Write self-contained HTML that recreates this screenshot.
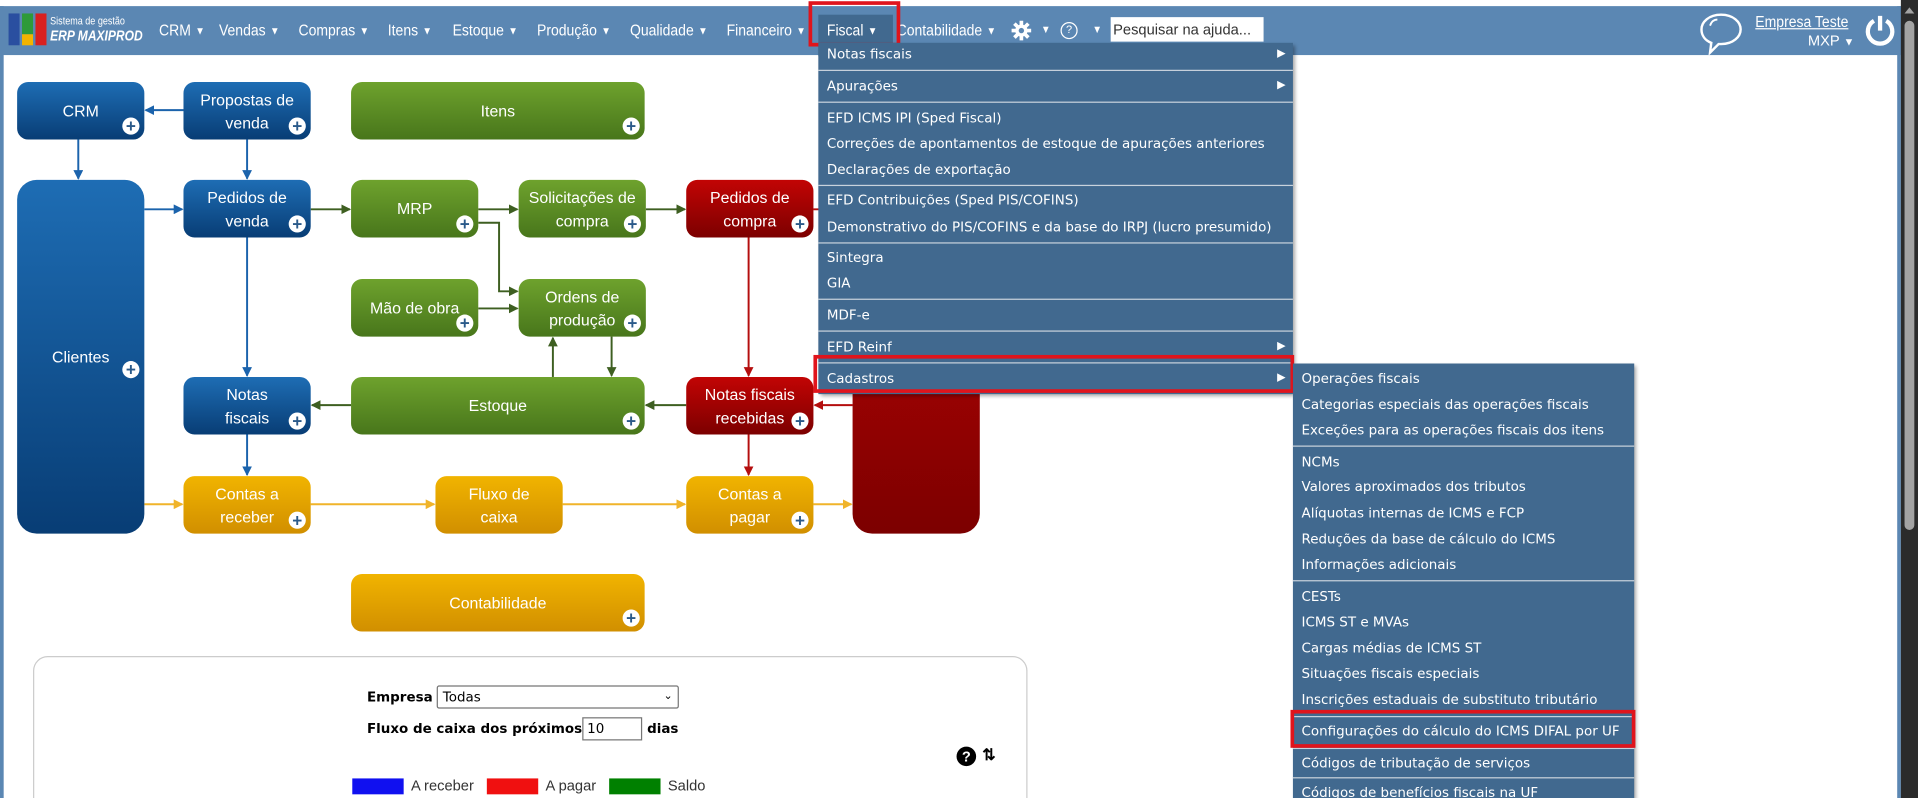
<!DOCTYPE html>
<html><head><meta charset="utf-8">
<style>
*{margin:0;padding:0;box-sizing:border-box}
html,body{width:1918px;height:798px;overflow:hidden;background:#fff}
#s{position:absolute;left:0;top:0;width:1568px;height:652px;overflow:hidden;transform:scale(1.22321,1.22393);transform-origin:0 0;font-family:"Liberation Sans",sans-serif}
.a{position:absolute}
.bar{left:0;top:5px;width:1568px;height:40px;background:#5b87b3}
.frame{left:0;top:5px;width:1554px;height:647px;border-left:3px solid #5b87b3;border-right:3px solid #5b87b3}
.nav{color:#fff;font-size:13px;top:17px;white-space:nowrap;transform:scaleX(.88);transform-origin:0 0}
.tri{font-size:9px;margin-left:4px;vertical-align:1px}
.m{background:#41698f;color:#fff;font-family:"DejaVu Sans",sans-serif;font-size:11px;box-shadow:2px 2px 3px rgba(0,0,0,.35)}
.m div{position:absolute;left:7px;white-space:nowrap}
.m hr{position:absolute;left:0;right:0;border:0;border-top:1px solid #c8d2dc;height:0}
.b{position:absolute;border-radius:9px;color:#fff;font-size:13px;display:flex;align-items:center;justify-content:center;text-align:center;line-height:19px}
.bl{background:linear-gradient(#1e6db4,#083d75)}
.gr{background:linear-gradient(#6ea22d,#48761b)}
.rd{background:linear-gradient(#c20404,#7c0000)}
.ye{background:linear-gradient(#f1b400,#d18f00)}
.p{position:absolute;right:4px;bottom:4px;width:14px;height:14px;border-radius:50%;background:#fff;color:#2b5a8a;font-size:14px;font-weight:bold;line-height:14px;text-align:center}
.red{position:absolute;border:3px solid #e0141c}
</style></head><body>
<div id="s">
<div class="a frame"></div>
<div class="a bar"></div>
<div class="a" style="left:1554px;top:0;width:14px;height:652px;background:#2b2b2b"></div>
<div class="a" style="left:1557px;top:17px;width:8px;height:416px;background:#a3a3a3;border-radius:4px"></div>
<div class="a" style="left:1557px;top:6px;width:0;height:0;border-left:4px solid transparent;border-right:4px solid transparent;border-bottom:5px solid #a3a3a3"></div>

<!-- logo -->
<div class="a" style="left:7px;top:11px;width:9px;height:26px;background:#2a4fa0"></div>
<div class="a" style="left:18px;top:11px;width:9px;height:17px;background:#2e9a3a"></div>
<div class="a" style="left:18px;top:28px;width:9px;height:9px;background:#f2b300"></div>
<div class="a" style="left:29px;top:11px;width:9px;height:26px;background:#d82020"></div>
<div class="a" style="left:41px;top:11px;color:#fff;font-size:9px;line-height:12px;white-space:nowrap;transform:scaleX(.82);transform-origin:0 0">Sistema de gestão<br><i style="font-size:12px;font-weight:bold">ERP MAXIPROD</i></div>

<div class="a nav" style="left:130px">CRM<span class="tri">▼</span></div>
<div class="a nav" style="left:179px">Vendas<span class="tri">▼</span></div>
<div class="a nav" style="left:244px">Compras<span class="tri">▼</span></div>
<div class="a nav" style="left:317px">Itens<span class="tri">▼</span></div>
<div class="a nav" style="left:370px">Estoque<span class="tri">▼</span></div>
<div class="a nav" style="left:439px">Produção<span class="tri">▼</span></div>
<div class="a nav" style="left:515px">Qualidade<span class="tri">▼</span></div>
<div class="a nav" style="left:594px">Financeiro<span class="tri">▼</span></div>
<div class="a" style="left:669px;top:12px;width:61px;height:34px;background:#41698f"></div>
<div class="a nav" style="left:676px">Fiscal<span class="tri">▼</span></div>
<div class="a nav" style="left:733px">Contabilidade<span class="tri">▼</span></div>
<svg class="a" style="left:826px;top:16px" width="18" height="18" viewBox="0 0 18 18"><g stroke="#fff" stroke-width="3"><path d="M9 1v16M1 9h16M3.3 3.3l11.4 11.4M14.7 3.3L3.3 14.7"/></g><circle cx="9" cy="9" r="5" fill="#fff"/><circle cx="9" cy="9" r="2.2" fill="#5b87b3"/></svg>
<div class="a nav" style="left:851px;font-size:9px;top:19px">▼</div>
<div class="a" style="left:867px;top:18px;width:14px;height:14px;border:1.5px solid #fff;border-radius:50%;color:#fff;font-size:9px;text-align:center;line-height:11px">?</div>
<div class="a nav" style="left:893px;font-size:9px;top:19px">▼</div>
<div class="a" style="left:908px;top:14px;width:125px;height:20px;background:#fff;color:#333;font-size:12px;line-height:20px;padding-left:2px;white-space:nowrap;overflow:hidden">Pesquisar na ajuda...</div>
<div class="red" style="left:661px;top:1px;width:75px;height:37px"></div>

<!-- right -->
<svg class="a" style="left:1388px;top:9px" width="38" height="36" viewBox="0 0 38 36"><path d="M19 3C9 3 3 9 3 15c0 5 3 9 8 11l-1 8 7-7c1 0 1 0 2 0 10 0 16-6 16-12S29 3 19 3z" fill="none" stroke="#fff" stroke-width="2"/><path d="M10 12c1-3 3-5 6-5" fill="none" stroke="#fff" stroke-width="1.5"/></svg>
<div class="a" style="left:1435px;top:10px;color:#fff;font-size:13px;text-decoration:underline;transform:scaleX(.88);transform-origin:0 0;white-space:nowrap">Empresa Teste</div>
<div class="a" style="left:1478px;top:26px;color:#fff;font-size:12px;white-space:nowrap">MXP <span style="font-size:9px">▼</span></div>
<svg class="a" style="left:1524px;top:11px" width="26" height="28" viewBox="0 0 26 28"><path d="M8 6A10 10 0 1 0 18 6" fill="none" stroke="#fff" stroke-width="3.5"/><path d="M13 2v12" stroke="#fff" stroke-width="3.5"/></svg>

<!-- diagram -->
<svg class="a" style="left:0;top:0" width="1568" height="652" viewBox="0 0 1568 652">
<defs>
<marker id="mb" markerWidth="8" markerHeight="8" refX="7" refY="4" orient="auto" markerUnits="userSpaceOnUse"><path d="M0 0L8 4L0 8z" fill="#1b63ac"/></marker>
<marker id="mg" markerWidth="8" markerHeight="8" refX="7" refY="4" orient="auto" markerUnits="userSpaceOnUse"><path d="M0 0L8 4L0 8z" fill="#3e5f21"/></marker>
<marker id="mr" markerWidth="8" markerHeight="8" refX="7" refY="4" orient="auto" markerUnits="userSpaceOnUse"><path d="M0 0L8 4L0 8z" fill="#b40e0e"/></marker>
<marker id="my" markerWidth="8" markerHeight="8" refX="7" refY="4" orient="auto" markerUnits="userSpaceOnUse"><path d="M0 0L8 4L0 8z" fill="#f0b42a"/></marker>
</defs>
<g stroke-width="1.6" fill="none">
<g stroke="#1b63ac" marker-end="url(#mb)">
<path d="M150 90H119"/><path d="M64 114V146"/><path d="M202 114V146"/><path d="M118 171H149"/><path d="M202 194V307"/><path d="M202 355V388"/>
</g>
<g stroke="#3e5f21" marker-end="url(#mg)">
<path d="M254 171H286"/><path d="M391 171H423"/><path d="M528 171H560"/><path d="M391 182H408V238H423"/><path d="M391 252H423"/><path d="M452 308V276"/><path d="M500 275V307"/><path d="M287 331H255"/><path d="M561 331H528"/>
</g>
<g stroke="#b40e0e" marker-end="url(#mr)">
<path d="M665 171H696"/><path d="M612 194V307"/><path d="M697 331H666"/><path d="M612 355V388"/>
</g>
<g stroke="#f0b42a" marker-end="url(#my)">
<path d="M118 412H149"/><path d="M254 412H355"/><path d="M460 412H560"/><path d="M665 412H696"/>
</g>
</g>
</svg>

<div class="b bl" style="left:14px;top:67px;width:104px;height:47px">CRM<span class="p">+</span></div>
<div class="b bl" style="left:150px;top:67px;width:104px;height:47px">Propostas de<br>venda<span class="p">+</span></div>
<div class="b gr" style="left:287px;top:67px;width:240px;height:47px">Itens<span class="p">+</span></div>
<div class="b bl" style="left:14px;top:147px;width:104px;height:289px;border-radius:16px">Clientes<span class="p" style="top:148px;bottom:auto">+</span></div>
<div class="b bl" style="left:150px;top:147px;width:104px;height:47px">Pedidos de<br>venda<span class="p">+</span></div>
<div class="b gr" style="left:287px;top:147px;width:104px;height:47px">MRP<span class="p">+</span></div>
<div class="b gr" style="left:424px;top:147px;width:104px;height:47px">Solicitações de<br>compra<span class="p">+</span></div>
<div class="b rd" style="left:561px;top:147px;width:104px;height:47px">Pedidos de<br>compra<span class="p">+</span></div>
<div class="b gr" style="left:287px;top:228px;width:104px;height:47px">Mão de obra<span class="p">+</span></div>
<div class="b gr" style="left:424px;top:228px;width:104px;height:47px">Ordens de<br>produção<span class="p">+</span></div>
<div class="b bl" style="left:150px;top:308px;width:104px;height:47px">Notas<br>fiscais<span class="p">+</span></div>
<div class="b gr" style="left:287px;top:308px;width:240px;height:47px">Estoque<span class="p">+</span></div>
<div class="b rd" style="left:561px;top:308px;width:104px;height:47px">Notas fiscais<br>recebidas<span class="p">+</span></div>
<div class="b rd" style="left:697px;top:147px;width:104px;height:289px;border-radius:16px"></div>
<div class="b ye" style="left:150px;top:389px;width:104px;height:47px">Contas a<br>receber<span class="p">+</span></div>
<div class="b ye" style="left:356px;top:389px;width:104px;height:47px">Fluxo de<br>caixa</div>
<div class="b ye" style="left:561px;top:389px;width:104px;height:47px">Contas a<br>pagar<span class="p">+</span></div>
<div class="b ye" style="left:287px;top:469px;width:240px;height:47px">Contabilidade<span class="p">+</span></div>

<!-- bottom panel -->
<div class="a" style="left:27px;top:536px;width:813px;height:140px;border:1px solid #ccc;border-radius:12px"></div>
<div class="a" style="left:300px;top:563px;font-size:11px;font-weight:bold;font-family:'DejaVu Sans',sans-serif">Empresa</div>
<div class="a" style="left:357px;top:560px;width:198px;height:19px;border:1px solid #767676;border-radius:2px;font-size:11px;line-height:17px;padding-left:4px;font-family:'DejaVu Sans',sans-serif">Todas<span style="position:absolute;right:4px;font-size:9px">⌄</span></div>
<div class="a" style="left:300px;top:589px;font-size:11px;font-weight:bold;font-family:'DejaVu Sans',sans-serif">Fluxo de caixa dos próximos</div>
<div class="a" style="left:476px;top:586px;width:49px;height:19px;border:1px solid #767676;font-size:11px;line-height:17px;padding-left:3px;font-family:'DejaVu Sans',sans-serif">10</div>
<div class="a" style="left:529px;top:589px;font-size:11px;font-weight:bold;font-family:'DejaVu Sans',sans-serif">dias</div>
<div class="a" style="left:782px;top:610px;width:16px;height:16px;border-radius:50%;background:#000;color:#fff;font-size:12px;font-weight:bold;text-align:center;line-height:16px">?</div>
<div class="a" style="left:803px;top:609px;font-size:13px;font-weight:bold">⇅</div>
<div class="a" style="left:288px;top:636px;width:42px;height:13px;background:#1010f0"></div>
<div class="a" style="left:336px;top:635px;font-size:12px;color:#333">A receber</div>
<div class="a" style="left:398px;top:636px;width:42px;height:13px;background:#f01010"></div>
<div class="a" style="left:446px;top:635px;font-size:12px;color:#333">A pagar</div>
<div class="a" style="left:498px;top:636px;width:42px;height:13px;background:#008000"></div>
<div class="a" style="left:546px;top:635px;font-size:12px;color:#333">Saldo</div>

<!-- menu 1 -->
<div class="a m" style="left:669px;top:35px;width:388px;height:287px">
<div style="top:3px">Notas fiscais</div><span class="a" style="right:6px;top:4px;font-size:9px">▶</span><hr style="top:22px">
<div style="top:29px">Apurações</div><span class="a" style="right:6px;top:30px;font-size:9px">▶</span><hr style="top:48px">
<div style="top:55px">EFD ICMS IPI (Sped Fiscal)</div>
<div style="top:76px">Correções de apontamentos de estoque de apurações anteriores</div>
<div style="top:97px">Declarações de exportação</div><hr style="top:116px">
<div style="top:122px">EFD Contribuições (Sped PIS/COFINS)</div>
<div style="top:144px">Demonstrativo do PIS/COFINS e da base do IRPJ (lucro presumido)</div><hr style="top:163px">
<div style="top:169px">Sintegra</div>
<div style="top:190px">GIA</div><hr style="top:209px">
<div style="top:216px">MDF-e</div><hr style="top:235px">
<div style="top:242px">EFD Reinf</div><span class="a" style="right:6px;top:243px;font-size:9px">▶</span><hr style="top:261px">
<div style="top:268px">Cadastros</div><span class="a" style="right:6px;top:269px;font-size:9px">▶</span>
</div>
<div class="red" style="left:665px;top:290px;width:393px;height:31px"></div>

<!-- menu 2 -->
<div class="a m" style="left:1057px;top:297px;width:279px;height:360px">
<div style="top:6px">Operações fiscais</div>
<div style="top:27px">Categorias especiais das operações fiscais</div>
<div style="top:48px">Exceções para as operações fiscais dos itens</div><hr style="top:67px">
<div style="top:74px">NCMs</div>
<div style="top:94px">Valores aproximados dos tributos</div>
<div style="top:116px">Alíquotas internas de ICMS e FCP</div>
<div style="top:137px">Reduções da base de cálculo do ICMS</div>
<div style="top:158px">Informações adicionais</div><hr style="top:177px">
<div style="top:184px">CESTs</div>
<div style="top:205px">ICMS ST e MVAs</div>
<div style="top:226px">Cargas médias de ICMS ST</div>
<div style="top:247px">Situações fiscais especiais</div>
<div style="top:268px">Inscrições estaduais de substituto tributário</div><hr style="top:288px">
<div style="top:294px">Configurações do cálculo do ICMS DIFAL por UF</div><hr style="top:314px">
<div style="top:320px">Códigos de tributação de serviços</div><hr style="top:338px">
<div style="top:344px">Códigos de benefícios fiscais na UF</div>
</div>
<div class="red" style="left:1055px;top:580px;width:282px;height:31px"></div>
</div>
</body></html>
